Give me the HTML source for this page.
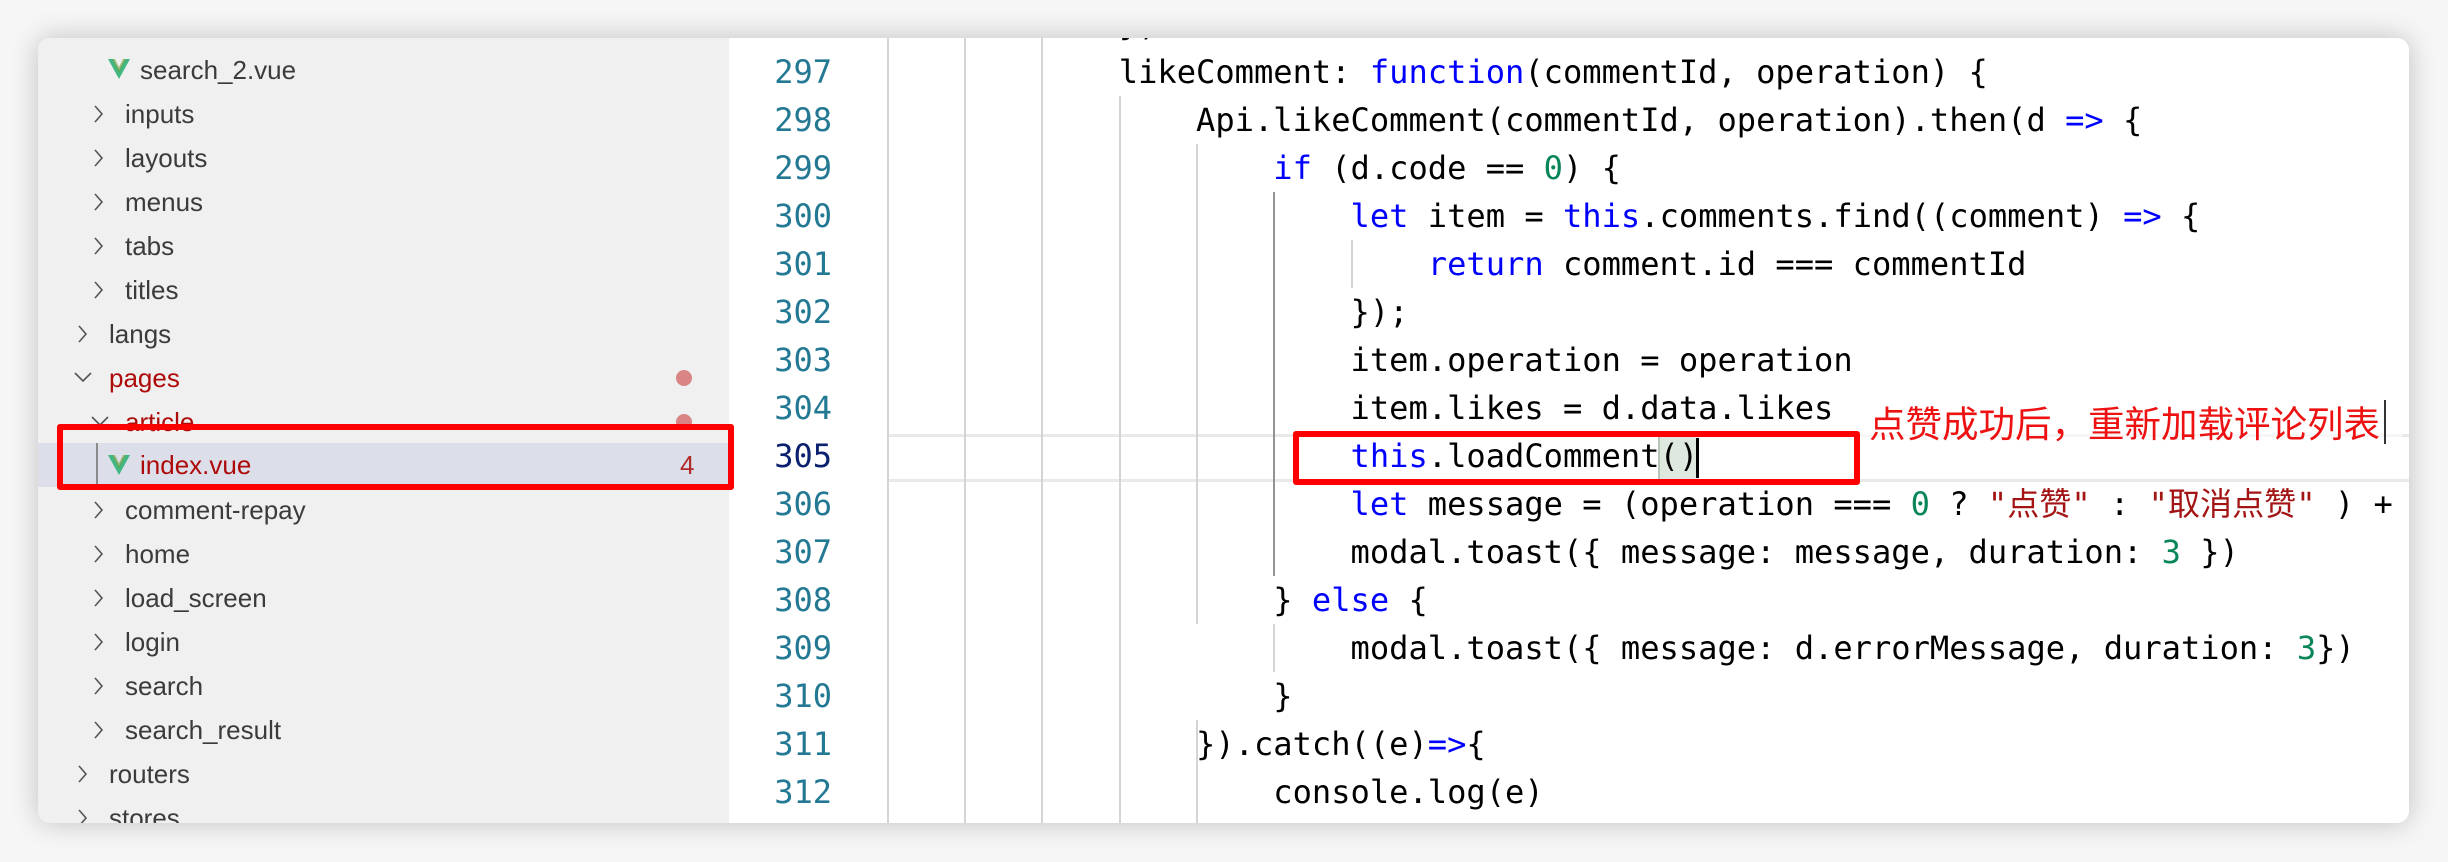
<!DOCTYPE html>
<html><head><meta charset="utf-8"><style>
*{margin:0;padding:0;box-sizing:border-box}
body{width:2448px;height:862px;background:#f6f6f6;position:relative;overflow:hidden}
#win{position:absolute;left:38px;top:38px;width:2371px;height:785px;border-radius:12px;overflow:hidden;background:#fff;box-shadow:0 0 28px rgba(0,0,0,.22)}
#side{position:absolute;left:0;top:0;width:691px;height:785px;background:#f0f0f0}
.it{position:absolute;height:44px;line-height:44px;font-family:"Liberation Sans",sans-serif;font-size:26px;color:#3b3b3b;white-space:nowrap}
.red{color:#ad0a0a}
.chev{position:absolute;width:10px;height:18px}
.dot{position:absolute;width:16px;height:16px;border-radius:50%;background:#d98585}
.g{position:absolute;width:2px;background:#d4d4d4}
.code{position:absolute;left:849px;height:48px;line-height:48px;font-family:"DejaVu Sans Mono","Noto Sans CJK SC",monospace;font-size:32.1px;color:#000;white-space:pre}
.ln{position:absolute;left:700px;width:94px;text-align:right;height:48px;line-height:48px;font-family:"DejaVu Sans Mono",monospace;font-size:32px;color:#237893}
.k{color:#0000ff}.n{color:#098658}.s{color:#a31515}
</style></head><body>
<div id="win">
<div id="side">
<svg style="position:absolute;left:70px;top:20px" width="22" height="22" viewBox="0 0 22 22"><path d="M0 1h5l6 11 6-11h5L11 21z" fill="#41b883"/><path d="M4 1h3l4 8 4-8h3l-7 14z" fill="#6a9f3a" opacity=".6"/></svg>
<div class="it" style="left:102px;top:10px">search_2.vue</div>

<svg class="chev" style="left:56px;top:67px" viewBox="0 0 10 18"><polyline points="1,1 8,9 1,17" fill="none" stroke="#555" stroke-width="1.6"/></svg>
<div class="it" style="left:87px;top:54px">inputs</div>
<svg class="chev" style="left:56px;top:111px" viewBox="0 0 10 18"><polyline points="1,1 8,9 1,17" fill="none" stroke="#555" stroke-width="1.6"/></svg>
<div class="it" style="left:87px;top:98px">layouts</div>
<svg class="chev" style="left:56px;top:155px" viewBox="0 0 10 18"><polyline points="1,1 8,9 1,17" fill="none" stroke="#555" stroke-width="1.6"/></svg>
<div class="it" style="left:87px;top:142px">menus</div>
<svg class="chev" style="left:56px;top:199px" viewBox="0 0 10 18"><polyline points="1,1 8,9 1,17" fill="none" stroke="#555" stroke-width="1.6"/></svg>
<div class="it" style="left:87px;top:186px">tabs</div>
<svg class="chev" style="left:56px;top:243px" viewBox="0 0 10 18"><polyline points="1,1 8,9 1,17" fill="none" stroke="#555" stroke-width="1.6"/></svg>
<div class="it" style="left:87px;top:230px">titles</div>
<svg class="chev" style="left:40px;top:287px" viewBox="0 0 10 18"><polyline points="1,1 8,9 1,17" fill="none" stroke="#555" stroke-width="1.6"/></svg>
<div class="it" style="left:71px;top:274px">langs</div>
<svg style="position:absolute;left:36px;top:334px" width="18" height="10" viewBox="0 0 18 10"><polyline points="1,1 9,9 17,1" fill="none" stroke="#555" stroke-width="1.6"/></svg>
<div class="it red" style="left:71px;top:318px">pages</div>
<div class="dot" style="left:638px;top:332px"></div>
<svg style="position:absolute;left:53px;top:378px" width="18" height="10" viewBox="0 0 18 10"><polyline points="1,1 9,9 17,1" fill="none" stroke="#555" stroke-width="1.6"/></svg>
<div class="it red" style="left:87px;top:362px">article</div>
<div class="dot" style="left:638px;top:376px"></div>

<div style="position:absolute;left:0;top:405px;width:691px;height:44px;background:#dcdfe9"></div>
<div style="position:absolute;left:58px;top:405px;width:2px;height:44px;background:#8a8a8a"></div>
<svg style="position:absolute;left:70px;top:416px" width="22" height="22" viewBox="0 0 22 22"><path d="M0 1h5l6 11 6-11h5L11 21z" fill="#41b883"/><path d="M4 1h3l4 8 4-8h3l-7 14z" fill="#6a9f3a" opacity=".6"/></svg>
<div class="it red" style="left:102px;top:405px">index.vue</div>
<div class="it" style="left:642px;top:405px;color:#b02a2a">4</div>

<svg class="chev" style="left:56px;top:463px" viewBox="0 0 10 18"><polyline points="1,1 8,9 1,17" fill="none" stroke="#555" stroke-width="1.6"/></svg>
<div class="it" style="left:87px;top:450px">comment-repay</div>
<svg class="chev" style="left:56px;top:507px" viewBox="0 0 10 18"><polyline points="1,1 8,9 1,17" fill="none" stroke="#555" stroke-width="1.6"/></svg>
<div class="it" style="left:87px;top:494px">home</div>
<svg class="chev" style="left:56px;top:551px" viewBox="0 0 10 18"><polyline points="1,1 8,9 1,17" fill="none" stroke="#555" stroke-width="1.6"/></svg>
<div class="it" style="left:87px;top:538px">load_screen</div>
<svg class="chev" style="left:56px;top:595px" viewBox="0 0 10 18"><polyline points="1,1 8,9 1,17" fill="none" stroke="#555" stroke-width="1.6"/></svg>
<div class="it" style="left:87px;top:582px">login</div>
<svg class="chev" style="left:56px;top:639px" viewBox="0 0 10 18"><polyline points="1,1 8,9 1,17" fill="none" stroke="#555" stroke-width="1.6"/></svg>
<div class="it" style="left:87px;top:626px">search</div>
<svg class="chev" style="left:56px;top:683px" viewBox="0 0 10 18"><polyline points="1,1 8,9 1,17" fill="none" stroke="#555" stroke-width="1.6"/></svg>
<div class="it" style="left:87px;top:670px">search_result</div>
<svg class="chev" style="left:40px;top:727px" viewBox="0 0 10 18"><polyline points="1,1 8,9 1,17" fill="none" stroke="#555" stroke-width="1.6"/></svg>
<div class="it" style="left:71px;top:714px">routers</div>
<svg class="chev" style="left:40px;top:771px" viewBox="0 0 10 18"><polyline points="1,1 8,9 1,17" fill="none" stroke="#555" stroke-width="1.6"/></svg>
<div class="it" style="left:71px;top:758px">stores</div>
</div>

<div style="position:absolute;left:849px;top:396px;width:1530px;height:48px;border-top:3px solid #e9e9e9;border-bottom:3px solid #e9e9e9"></div>

<div class="g" style="left:849px;top:0;height:785px"></div>
<div class="g" style="left:926px;top:0;height:785px"></div>
<div class="g" style="left:1003px;top:0;height:785px"></div>
<div class="g" style="left:1081px;top:58px;height:727px"></div>
<div class="g" style="left:1158px;top:106px;height:480px"></div>
<div class="g" style="left:1158px;top:682px;height:103px"></div>
<div class="g" style="left:1235px;top:154px;height:384px;background:#939393"></div>
<div class="g" style="left:1235px;top:586px;height:48px"></div>
<div class="g" style="left:1313px;top:202px;height:48px"></div>

<div style="position:absolute;left:1620px;top:399px;width:40px;height:42px;background:#dfe8df;border-left:2px solid #b8c4b8"></div>
<div style="position:absolute;left:1658px;top:400px;width:3px;height:40px;background:#000"></div>

<div class="ln" style="top:10px">297</div>
<div class="ln" style="top:58px">298</div>
<div class="ln" style="top:106px">299</div>
<div class="ln" style="top:154px">300</div>
<div class="ln" style="top:202px">301</div>
<div class="ln" style="top:250px">302</div>
<div class="ln" style="top:298px">303</div>
<div class="ln" style="top:346px">304</div>
<div class="ln" style="top:394px;color:#0b216f">305</div>
<div class="ln" style="top:442px">306</div>
<div class="ln" style="top:490px">307</div>
<div class="ln" style="top:538px">308</div>
<div class="ln" style="top:586px">309</div>
<div class="ln" style="top:634px">310</div>
<div class="ln" style="top:682px">311</div>
<div class="ln" style="top:730px">312</div>

<div class="code" style="top:-38px">            },</div>
<div class="code" style="top:10px">            likeComment: <span class="k">function</span>(commentId, operation) {</div>
<div class="code" style="top:58px">                Api.likeComment(commentId, operation).then(d <span class="k">=&gt;</span> {</div>
<div class="code" style="top:106px">                    <span class="k">if</span> (d.code == <span class="n">0</span>) {</div>
<div class="code" style="top:154px">                        <span class="k">let</span> item = <span class="k">this</span>.comments.find((comment) <span class="k">=&gt;</span> {</div>
<div class="code" style="top:202px">                            <span class="k">return</span> comment.id === commentId</div>
<div class="code" style="top:250px">                        });</div>
<div class="code" style="top:298px">                        item.operation = operation</div>
<div class="code" style="top:346px">                        item.likes = d.data.likes</div>
<div class="code" style="top:394px">                        <span class="k">this</span>.loadComment()</div>
<div class="code" style="top:442px">                        <span class="k">let</span> message = (operation === <span class="n">0</span> ? <span class="s">"点赞"</span> : <span class="s">"取消点赞"</span> ) + message</div>
<div class="code" style="top:490px">                        modal.toast({ message: message, duration: <span class="n">3</span> })</div>
<div class="code" style="top:538px">                    } <span class="k">else</span> {</div>
<div class="code" style="top:586px">                        modal.toast({ message: d.errorMessage, duration: <span class="n">3</span>})</div>
<div class="code" style="top:634px">                    }</div>
<div class="code" style="top:682px">                }).catch((e)<span class="k">=&gt;</span>{</div>
<div class="code" style="top:730px">                    console.log(e)</div>

<div style="position:absolute;left:1814px;top:350px;width:550px;height:70px;background:rgba(255,255,255,.6);border-radius:10px"></div>
<div style="position:absolute;left:1831px;top:357px;height:54px;line-height:54px;font-family:'Noto Sans CJK SC',sans-serif;font-size:36.5px;color:#ee1111;white-space:nowrap">点赞成功后，重新加载评论列表</div>
<div style="position:absolute;left:2346px;top:362px;width:2px;height:44px;background:#333"></div>

<div style="position:absolute;left:19px;top:386px;width:677px;height:66px;border:6px solid #ff0000;border-radius:3px"></div>
<div style="position:absolute;left:1255px;top:393px;width:567px;height:54px;border:6px solid #ff0000;border-radius:3px"></div>
</div>
</body></html>
